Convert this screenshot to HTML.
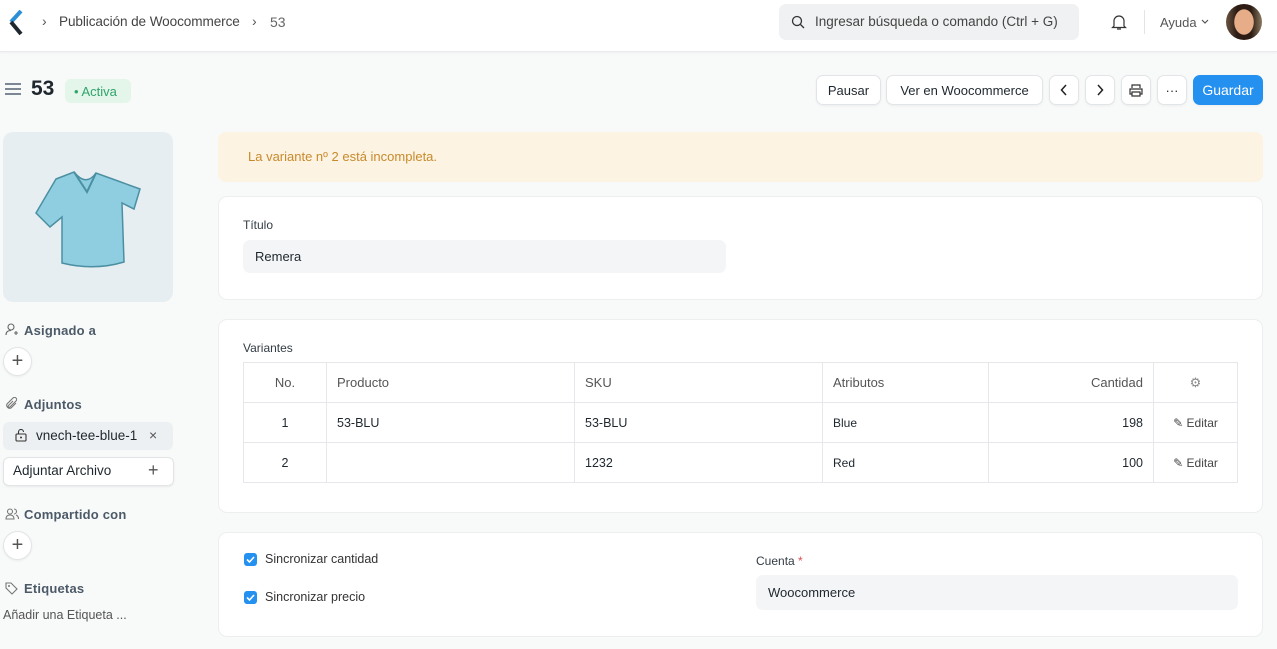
<!DOCTYPE html>
<html><head><meta charset="utf-8"><style>
*{box-sizing:border-box;margin:0;padding:0}
body{width:1277px;height:649px;overflow:hidden;background:#f8f9f9;font-family:"Liberation Sans",sans-serif;color:#1f272e;font-size:13px;position:relative}
.a{position:absolute}
.nav{left:0;top:0;width:1277px;height:52px;background:#fff;border-bottom:1px solid #e8eaed;box-shadow:0 1px 2px rgba(0,0,0,.04)}
.btn{position:absolute;top:75px;height:30px;background:#fff;border:1px solid #e2e5e8;border-radius:7px;font-size:13px;display:flex;align-items:center;justify-content:center;box-shadow:0 1px 2px rgba(0,0,0,.05)}
.card{position:absolute;left:218px;width:1045px;background:#fff;border:1px solid #eceef0;border-radius:9px}
.lbl{position:absolute;font-size:12px;color:#333c44}
.inp{position:absolute;background:#f4f5f6;border-radius:7px;font-size:13px;padding-left:12px;display:flex;align-items:center}
table{position:absolute;left:243px;top:362px;width:995px;border-collapse:collapse;font-size:12.5px}
td{border:1px solid #e5e7ea;height:40px;padding:0 10px}
.side{font-size:13px;color:#4c5a67;font-weight:bold;letter-spacing:.2px}
.plus{position:absolute;left:3px;width:29px;height:29px;border-radius:50%;background:#fff;border:1px solid #e2e5e8;font-size:20px;color:#555;display:flex;align-items:center;justify-content:center;box-shadow:0 1px 2px rgba(0,0,0,.06)}
.cb{position:absolute;left:244px;width:13px;height:13px;background:#2490ef;border-radius:3px}
</style></head><body>
<div class="a nav"></div>
<svg class="a" style="left:8px;top:10px" width="16" height="26" viewBox="0 0 16 26"><path d="M13 1 L3 12" stroke="#2c8fd6" stroke-width="4"/><path d="M3 12 L13 24" stroke="#1f272e" stroke-width="4"/></svg>
<div class="a" style="left:42px;top:13px;font-size:14px;color:#555">›</div>
<div class="a" style="left:59px;top:14px;font-size:13.6px;color:#444;letter-spacing:-.1px">Publicación de Woocommerce</div>
<div class="a" style="left:252px;top:13px;font-size:14px;color:#555">›</div>
<div class="a" style="left:270px;top:14px;font-size:14px;color:#666">53</div>
<div class="a" style="left:779px;top:4px;width:300px;height:36px;background:#f0f1f2;border-radius:7px"></div>
<svg class="a" style="left:791px;top:15px" width="14" height="14" viewBox="0 0 14 14"><circle cx="6" cy="6" r="4.5" fill="none" stroke="#333" stroke-width="1.3"/><path d="M9.5 9.5L13 13" stroke="#333" stroke-width="1.3"/></svg>
<div class="a" style="left:815px;top:14px;font-size:13.5px;color:#444">Ingresar búsqueda o comando (Ctrl + G)</div>
<svg class="a" style="left:1111px;top:13px" width="16" height="18" viewBox="0 0 16 18"><path d="M3 13V8a5 5 0 0 1 10 0v5l1.5 1.5h-13Z M6 16h4" fill="none" stroke="#333" stroke-width="1.2"/></svg>
<div class="a" style="left:1144px;top:10px;width:1px;height:24px;background:#e2e5e8"></div>
<div class="a" style="left:1160px;top:15px;font-size:13px;color:#555">Ayuda</div>
<svg class="a" style="left:1201px;top:19px" width="8" height="6" viewBox="0 0 8 6"><path d="M1 1l3 3 3-3" fill="none" stroke="#555" stroke-width="1.2"/></svg>
<div class="a" style="left:1226px;top:4px;width:36px;height:36px;border-radius:50%;background:radial-gradient(ellipse 10px 13px at 50% 50%,#e6ad88 0 95%,transparent 100%),linear-gradient(90deg,#6b5442,#2d1c14 30%,#2d1c14 70%,#8a7a60)"></div>

<div class="a" style="left:5px;top:83px;width:16px;height:2px;background:#7b8793;box-shadow:0 5px 0 #7b8793,0 10px 0 #7b8793"></div>
<div class="a" style="left:31px;top:77px;font-size:21px;font-weight:bold">53</div>
<div class="a" style="left:65px;top:79px;width:66px;height:24px;background:#e4f5e9;border-radius:6px;color:#30a46c;font-size:13px;display:flex;align-items:center;padding-left:9px">• Activa</div>
<div class="btn" style="left:816px;width:65px">Pausar</div>
<div class="btn" style="left:886px;width:157px">Ver en Woocommerce</div>
<div class="btn" style="left:1049px;width:30px"><svg width="8" height="12" viewBox="0 0 8 12"><path d="M6 1L1.5 6 6 11" fill="none" stroke="#222" stroke-width="1.5"/></svg></div>
<div class="btn" style="left:1085px;width:30px"><svg width="8" height="12" viewBox="0 0 8 12"><path d="M2 1l4.5 5L2 11" fill="none" stroke="#222" stroke-width="1.5"/></svg></div>
<div class="btn" style="left:1121px;width:30px"><svg width="14" height="13" viewBox="0 0 14 13"><path d="M3 4V1h8v3M3 10H1V5h12v5h-2M3 8h8v4H3Z" fill="none" stroke="#333" stroke-width="1.2"/></svg></div>
<div class="btn" style="left:1157px;width:30px">···</div>
<div class="btn" style="left:1193px;width:70px;background:#2490ef;border-color:#2490ef;color:#fff;font-size:14px">Guardar</div>

<div class="a" style="left:3px;top:132px;width:170px;height:170px;background:#e7eef2;border-radius:10px"></div>
<svg class="a" style="left:34px;top:167px" width="108" height="102" viewBox="0 0 108 102"><path d="M22 12 L40 5 Q52 20 62 6 L84 14 L106 22 L100 42 L88 36 L90 95 Q60 104 28 96 L28 50 L16 60 L2 46 Z" fill="#8fcde0" stroke="#4b8fa2" stroke-width="1.5"/><path d="M40 5 L53 25 L62 6" fill="none" stroke="#4b8fa2" stroke-width="2"/></svg>
<svg class="a" style="left:5px;top:323px" width="13" height="13" viewBox="0 0 13 13"><circle cx="6" cy="4" r="3" fill="none" stroke="#666" stroke-width="1.1"/><path d="M1 12c0-3 2-4.5 5-4.5M9 10h4M11 8v4" fill="none" stroke="#666" stroke-width="1.1"/></svg>
<div class="a side" style="left:24px;top:323px">Asignado a</div>
<div class="plus" style="top:347px">+</div>
<svg class="a" style="left:5px;top:397px" width="13" height="13" viewBox="0 0 13 13"><path d="M11 6L6 11a3 3 0 0 1-4-4l6-6a2 2 0 0 1 3 3L5 10a1 1 0 0 1-1.5-1.5L8 4" fill="none" stroke="#777" stroke-width="1.1"/></svg>
<div class="a side" style="left:24px;top:397px">Adjuntos</div>
<div class="a" style="left:3px;top:422px;width:170px;height:28px;background:#edf0f2;border-radius:6px"></div>
<svg class="a" style="left:15px;top:429px" width="12" height="13" viewBox="0 0 12 13"><rect x="1" y="5" width="10" height="7" rx="1" fill="none" stroke="#333" stroke-width="1.1"/><path d="M3.5 5V3a2.5 2.5 0 0 1 5 0" fill="none" stroke="#333" stroke-width="1.1"/><circle cx="6" cy="8.5" r="1" fill="#333"/></svg>
<div class="a" style="left:36px;top:428px;font-size:13.5px">vnech-tee-blue-1</div>
<div class="a" style="left:149px;top:427px;font-size:14px;color:#555">×</div>
<div class="a" style="left:3px;top:457px;width:171px;height:29px;background:#fff;border:1px solid #e2e5e8;border-radius:6px;box-shadow:0 1px 2px rgba(0,0,0,.06)"></div>
<div class="a" style="left:13px;top:463px;font-size:13.5px">Adjuntar Archivo</div>
<div class="a" style="left:148px;top:460px;font-size:18px;color:#555">+</div>
<svg class="a" style="left:5px;top:508px" width="14" height="12" viewBox="0 0 14 12"><circle cx="5" cy="3.5" r="2.5" fill="none" stroke="#777" stroke-width="1.1"/><path d="M1 11c0-3 2-4 4-4s4 1 4 4ZM9 1a2.5 2.5 0 0 1 0 5M11 7c1.5.5 2.5 2 2.5 4" fill="none" stroke="#777" stroke-width="1.1"/></svg>
<div class="a side" style="left:24px;top:507px">Compartido con</div>
<div class="plus" style="top:531px">+</div>
<svg class="a" style="left:5px;top:582px" width="13" height="13" viewBox="0 0 13 13"><path d="M1 1h5l6 6-5 5-6-6Z" fill="none" stroke="#777" stroke-width="1.1"/><circle cx="4" cy="4" r="1" fill="#777"/></svg>
<div class="a side" style="left:24px;top:581px">Etiquetas</div>
<div class="a" style="left:3px;top:608px;font-size:12.5px;color:#555">Añadir una Etiqueta ...</div>

<div class="a" style="left:218px;top:132px;width:1045px;height:50px;background:#fcf3e2;border-radius:8px;color:#c98a2c;font-size:13px;padding:17px 0 0 30px">La variante nº 2 está incompleta.</div>
<div class="card" style="top:196px;height:104px"></div>
<div class="lbl" style="left:243px;top:218px">Título</div>
<div class="inp" style="left:243px;top:240px;width:483px;height:33px">Remera</div>
<div class="card" style="top:319px;height:194px"></div>
<div class="lbl" style="left:243px;top:341px">Variantes</div>
<table>
<tr style="color:#555;font-size:13px"><td style="width:83px;text-align:center">No.</td><td style="width:248px">Producto</td><td style="width:248px">SKU</td><td style="width:166px">Atributos</td><td style="width:165px;text-align:right">Cantidad</td><td style="text-align:center;color:#888">⚙</td></tr>
<tr><td style="text-align:center">1</td><td>53-BLU</td><td>53-BLU</td><td style="font-size:12px">Blue</td><td style="text-align:right">198</td><td style="text-align:center;font-size:12px;color:#444">✎ Editar</td></tr>
<tr><td style="text-align:center">2</td><td></td><td>1232</td><td style="font-size:12px">Red</td><td style="text-align:right">100</td><td style="text-align:center;font-size:12px;color:#444">✎ Editar</td></tr>
</table>
<div class="card" style="top:532px;height:105px"></div>
<div class="cb" style="top:553px"><svg width="13" height="13" viewBox="0 0 13 13"><path d="M3 6.5l2.5 2.5L10 4" fill="none" stroke="#fff" stroke-width="1.6"/></svg></div><div class="a" style="left:265px;top:552px;font-size:12.5px;color:#333">Sincronizar cantidad</div>
<div class="cb" style="top:591px"><svg width="13" height="13" viewBox="0 0 13 13"><path d="M3 6.5l2.5 2.5L10 4" fill="none" stroke="#fff" stroke-width="1.6"/></svg></div><div class="a" style="left:265px;top:590px;font-size:12.5px;color:#333">Sincronizar precio</div>
<div class="lbl" style="left:756px;top:554px">Cuenta <span style="color:#e24c4c">*</span></div>
<div class="inp" style="left:756px;top:575px;width:482px;height:35px">Woocommerce</div>
</body></html>
